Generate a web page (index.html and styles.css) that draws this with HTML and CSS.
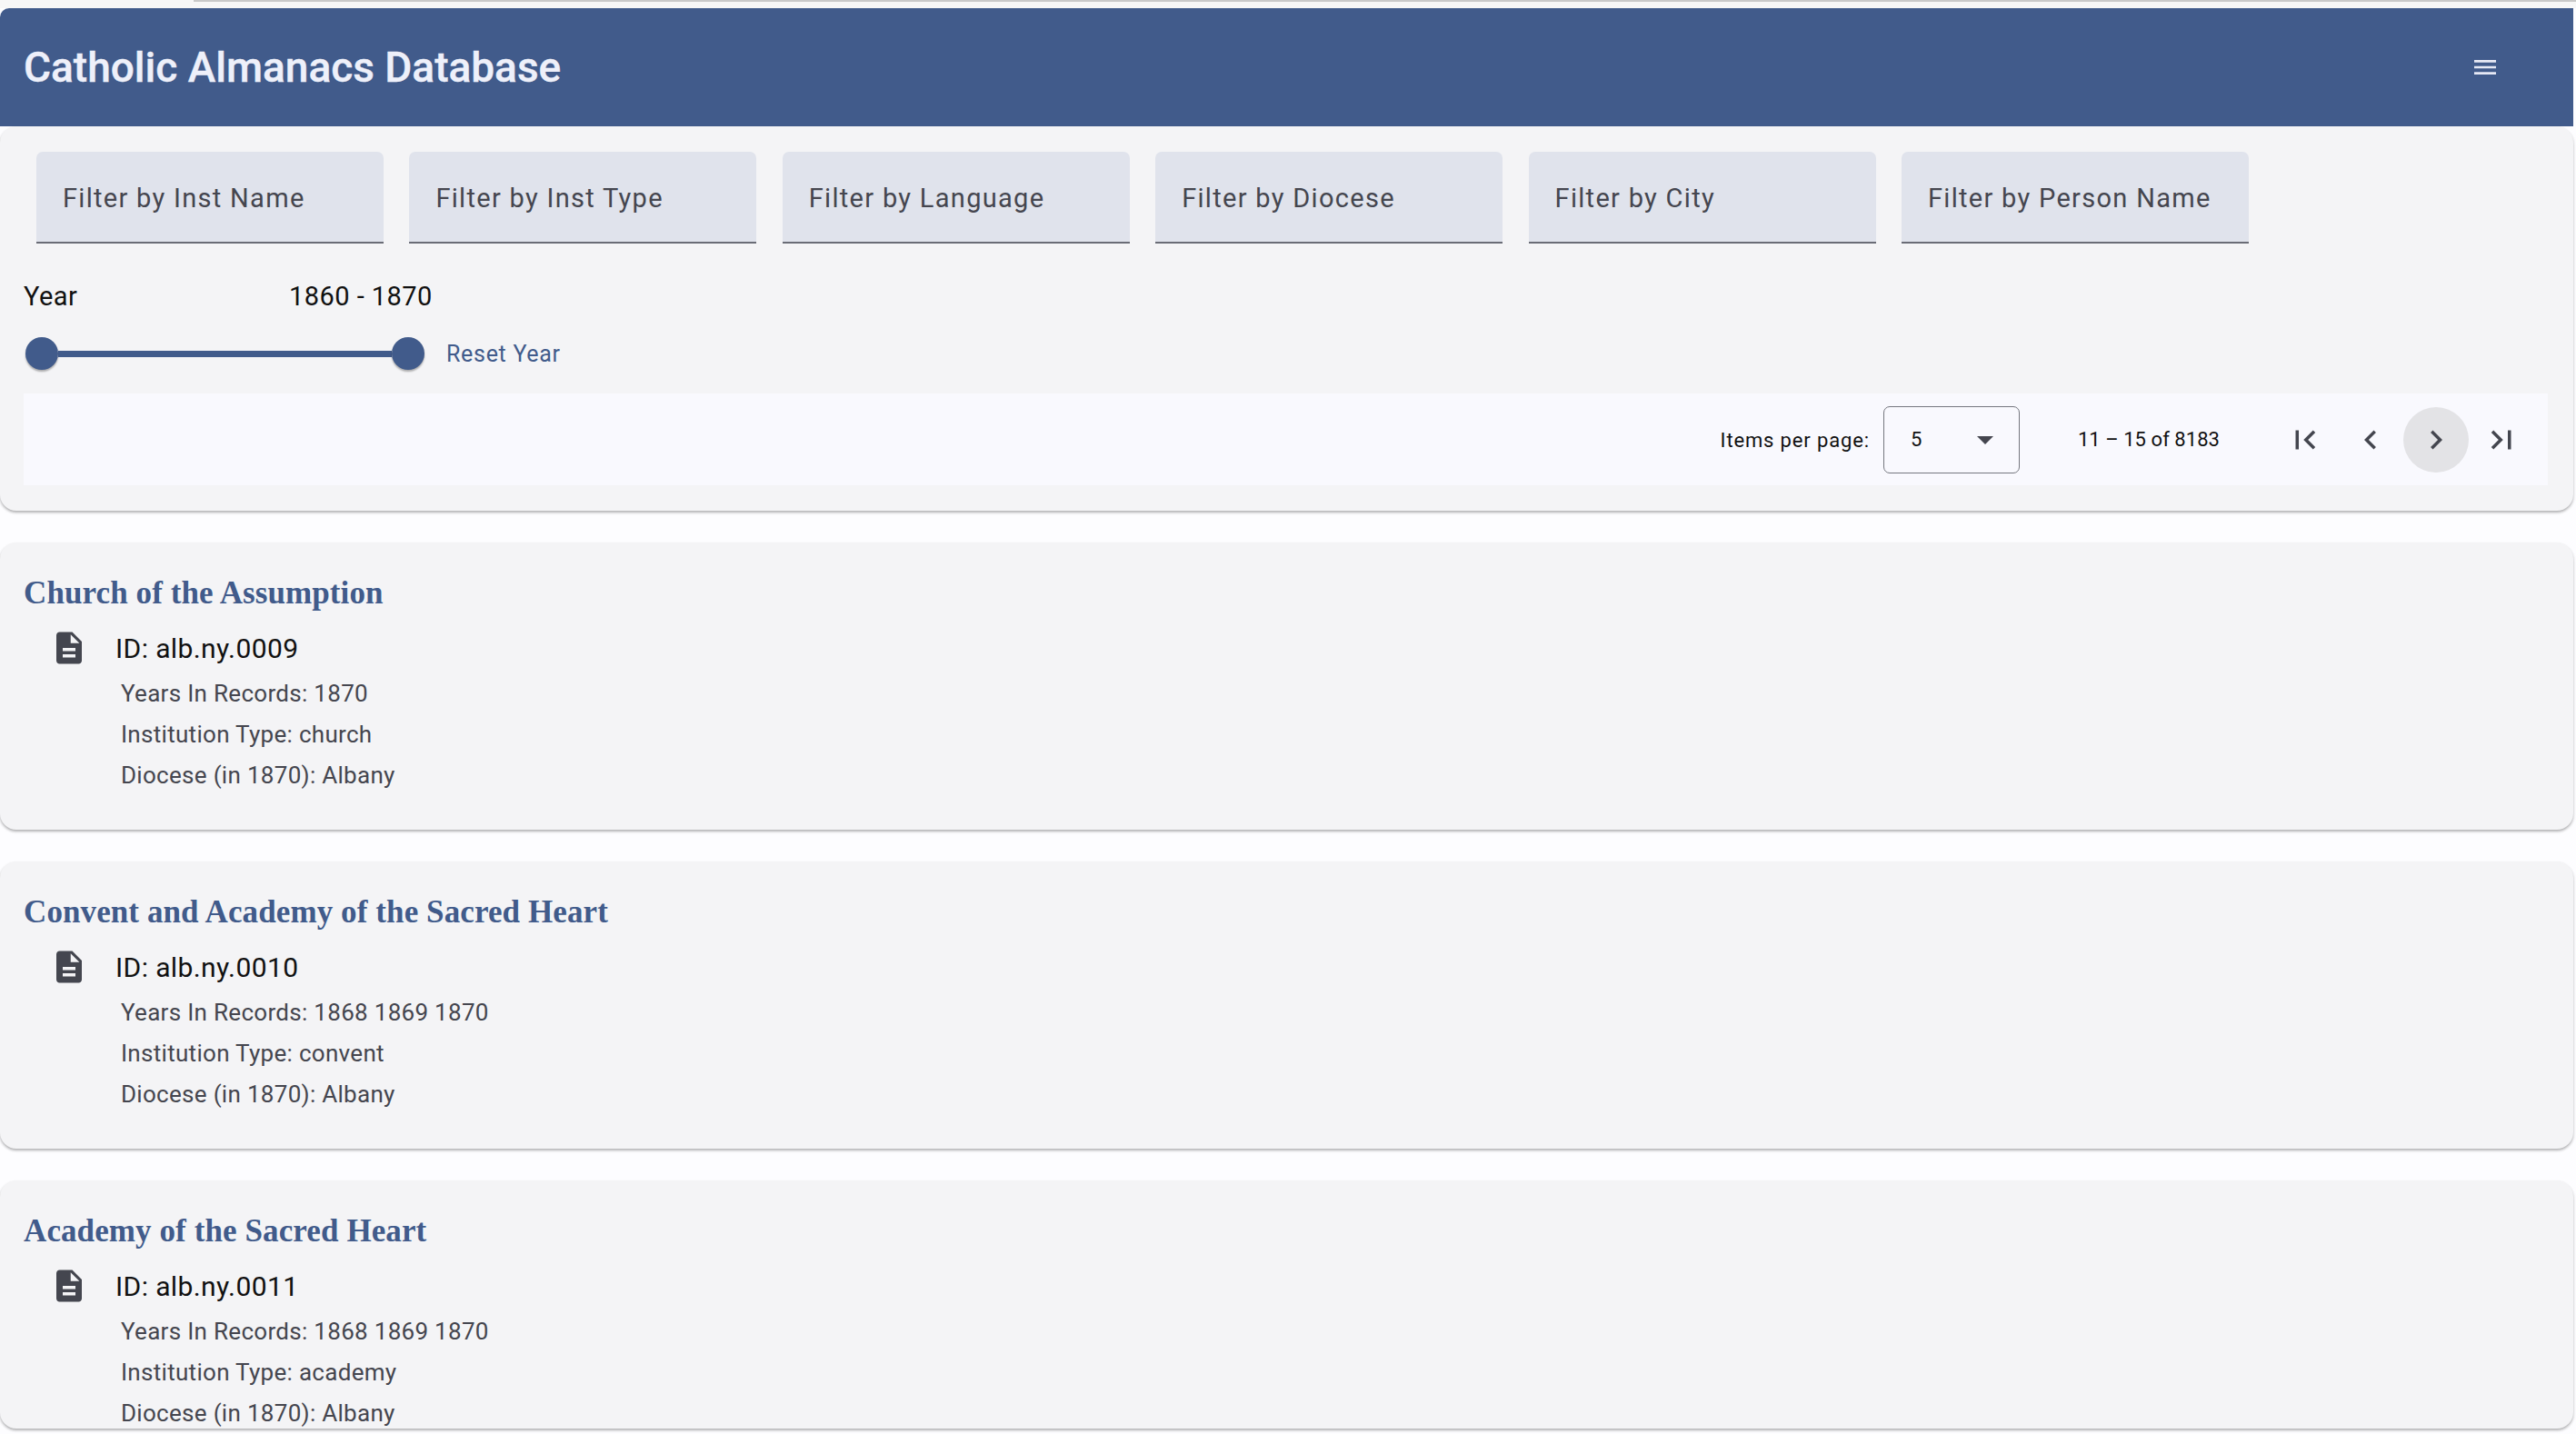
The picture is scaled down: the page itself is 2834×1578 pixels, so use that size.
FILE: index.html
```html
<!DOCTYPE html>
<html>
<head>
<meta name="viewport" content="width=device-width, initial-scale=1.0"/>
<title>Catholic Almanacs Database</title>
<link rel="stylesheet" href="styles.css">
</head>
<body>
<div class="top-strip"><div class="top-line"></div></div>

<div class="app">
  <header class="toolbar">
    <span class="app-title">Catholic Almanacs Database</span>
    <svg class="menu-icon" viewBox="0 0 24 24"><path d="M3 18h18v-2H3v2zm0-5h18v-2H3v2zm0-7v2h18V6H3z"/></svg>
  </header>

  <section class="panel">
    <div class="filters">
      <div class="filter">Filter by Inst Name</div>
      <div class="filter">Filter by Inst Type</div>
      <div class="filter">Filter by Language</div>
      <div class="filter">Filter by Diocese</div>
      <div class="filter">Filter by City</div>
      <div class="filter">Filter by Person Name</div>
    </div>

    <div class="year-row">
      <span class="year-label">Year</span>
      <span>1860 - 1870</span>
    </div>

    <div class="slider-row">
      <div class="slider">
        <span class="thumb"></span>
        <span class="track"></span>
        <span class="thumb"></span>
      </div>
      <span class="reset">Reset Year</span>
    </div>

    <div class="paginator">
      <span class="per-page">Items per page:</span>
      <div class="page-select">
        <span>5</span>
        <span class="arrow"></span>
      </div>
      <span class="range">11 – 15 of 8183</span>
      <div class="page-btn"><svg viewBox="0 0 24 24"><path d="M18.41 16.59L13.82 12l4.59-4.59L17 6l-6 6 6 6zM6 6h2v12H6z"/></svg></div>
      <div class="page-btn"><svg viewBox="0 0 24 24"><path d="M15.41 7.41L14 6l-6 6 6 6 1.41-1.41L10.83 12z"/></svg></div>
      <div class="page-btn hover"><svg viewBox="0 0 24 24"><path d="M10 6L8.59 7.41 13.17 12l-4.58 4.59L10 18l6-6z"/></svg></div>
      <div class="page-btn"><svg viewBox="0 0 24 24"><path d="M5.59 7.41L10.18 12l-4.59 4.59L7 18l6-6-6-6zM16 6h2v12h-2z"/></svg></div>
    </div>
  </section>

  <!-- Results -->
  <article class="card">
    <h2>Church of the Assumption</h2>
    <div class="id-row">
      <svg class="doc-icon" viewBox="0 0 24 24"><path d="M14 2H6c-1.1 0-1.99.9-1.99 2L4 20c0 1.1.89 2 1.99 2H18c1.1 0 2-.9 2-2V8l-6-6zm2 16H8v-2h8v2zm0-4H8v-2h8v2zm-3-5V3.5L18.5 9H13z"/></svg>
      <span>ID: alb.ny.0009</span>
    </div>
    <p>Years In Records: 1870</p>
    <p>Institution Type: church</p>
    <p>Diocese (in 1870): Albany</p>
  </article>

  <article class="card">
    <h2>Convent and Academy of the Sacred Heart</h2>
    <div class="id-row">
      <svg class="doc-icon" viewBox="0 0 24 24"><path d="M14 2H6c-1.1 0-1.99.9-1.99 2L4 20c0 1.1.89 2 1.99 2H18c1.1 0 2-.9 2-2V8l-6-6zm2 16H8v-2h8v2zm0-4H8v-2h8v2zm-3-5V3.5L18.5 9H13z"/></svg>
      <span>ID: alb.ny.0010</span>
    </div>
    <p>Years In Records: 1868 1869 1870</p>
    <p>Institution Type: convent</p>
    <p>Diocese (in 1870): Albany</p>
  </article>

  <article class="card last">
    <h2>Academy of the Sacred Heart</h2>
    <div class="id-row">
      <svg class="doc-icon" viewBox="0 0 24 24"><path d="M14 2H6c-1.1 0-1.99.9-1.99 2L4 20c0 1.1.89 2 1.99 2H18c1.1 0 2-.9 2-2V8l-6-6zm2 16H8v-2h8v2zm0-4H8v-2h8v2zm-3-5V3.5L18.5 9H13z"/></svg>
      <span>ID: alb.ny.0011</span>
    </div>
    <p>Years In Records: 1868 1869 1870</p>
    <p>Institution Type: academy</p>
    <p>Diocese (in 1870): Albany</p>
  </article>
</div>
</body>
</html>
```

FILE: styles.css
```css
html, body {
  height: 1578px;
  overflow: hidden;
}

body {
  margin: 0;
  background-color: #fdfdff;
  font-family: Roboto, "Liberation Sans", sans-serif;
  color: #111;
}

.top-strip {
  height: 9px;
  background-color: #f7f7f7;
}

.top-line {
  height: 2px;
  margin-left: 213px;
  background-color: #c9c9c9;
}

.app {
  width: 2831px;
}

.toolbar {
  display: flex;
  align-items: center;
  justify-content: space-between;
  height: 130px;
  padding: 0 81px 0 26px;
  background-color: #415b8b;
  border-top-left-radius: 10px;
  color: #eef0fa;
}

.app-title {
  font-size: 46px;
  font-weight: 500;
  -webkit-text-stroke: 0.4px #eef0fa;
}

.menu-icon {
  width: 32px;
  height: 32px;
  fill: #e6e9f5;
}

.panel {
  padding: 28px 0 28px;
  background-color: #f4f4f6;
  border-radius: 18px;
  box-shadow: 0 2px 3px rgba(0, 0, 0, 0.3);
}

.filters {
  display: flex;
  gap: 28.4px;
  padding-left: 40px;
}

.filter {
  display: flex;
  align-items: center;
  width: 382px;
  height: 101px;
  padding: 3px 0 0 29px;
  box-sizing: border-box;
  background-color: #e0e3ec;
  border-radius: 7px 7px 0 0;
  border-bottom: 2px solid #6a6c76;
  font-size: 29px;
  letter-spacing: 1.3px;
  color: #45464f;
}

.year-row {
  display: flex;
  align-items: center;
  height: 34px;
  margin-top: 41px;
  padding-left: 26px;
  font-size: 29px;
  letter-spacing: 0.45px;
}

.year-label {
  width: 292px;
}

.slider-row {
  display: flex;
  align-items: center;
  margin-top: 28px;
  padding-left: 28px;
}

.slider {
  display: flex;
  align-items: center;
  width: 439px;
}

.thumb {
  width: 36px;
  height: 36px;
  border-radius: 50%;
  background-color: #415b8b;
  box-shadow: 0 2px 2px rgba(0, 0, 0, 0.3);
}

.track {
  flex: 1;
  height: 7px;
  background-color: #415b8b;
}

.reset {
  margin-left: 24px;
  font-size: 25px;
  letter-spacing: 0.7px;
  color: #415b8b;
}

.paginator {
  display: flex;
  align-items: center;
  justify-content: flex-end;
  height: 101px;
  margin: 26px 28px 0 26px;
  padding-right: 15px;
  background-color: #f9f9fe;
  font-size: 22px;
}

.per-page {
  letter-spacing: 0.85px;
  padding-top: 2px;
}

.page-select {
  display: flex;
  align-items: center;
  justify-content: space-between;
  width: 150px;
  height: 74px;
  margin-left: 15px;
  padding: 0 28px 0 29px;
  box-sizing: border-box;
  border: 1.5px solid #75777f;
  border-radius: 7px;
}

.arrow {
  width: 0;
  height: 0;
  margin-top: 2px;
  border-left: 9px solid transparent;
  border-right: 9px solid transparent;
  border-top: 9px solid #45464f;
}

.range {
  margin: 0 58px 0 64px;
  letter-spacing: 0.05px;
}

.page-btn {
  display: flex;
  align-items: center;
  justify-content: center;
  width: 72px;
  height: 72px;
  border-radius: 50%;
}

.page-btn.hover {
  background-color: #e3e3e6;
}

.page-btn svg {
  width: 42px;
  height: 42px;
  fill: #44464f;
}

.card {
  height: 316px;
  margin-top: 35px;
  box-sizing: border-box;
  padding: 34px 0 0 26px;
  background-color: #f4f4f6;
  border-radius: 18px;
  box-shadow: 0 2px 3px rgba(0, 0, 0, 0.3);
  overflow: hidden;
}

.card.last {
  height: 273px;
}

.card h2 {
  margin: 0;
  font-family: "Liberation Serif", serif;
  font-size: 35px;
  line-height: 44px;
  font-weight: 700;
  letter-spacing: 0.1px;
  color: #415b8b;
}

.id-row {
  display: flex;
  align-items: center;
  gap: 30px;
  height: 42px;
  margin-top: 17px;
  padding-left: 29px;
  font-size: 30px;
  letter-spacing: 0.4px;
}

.doc-icon {
  width: 42px;
  height: 42px;
  fill: #44464f;
}

.card p {
  margin: 0 0 0 107px;
  font-size: 26px;
  line-height: 45px;
  letter-spacing: 0.3px;
  color: #45464f;
}

.id-row + p {
  margin-top: 7px;
}
```
